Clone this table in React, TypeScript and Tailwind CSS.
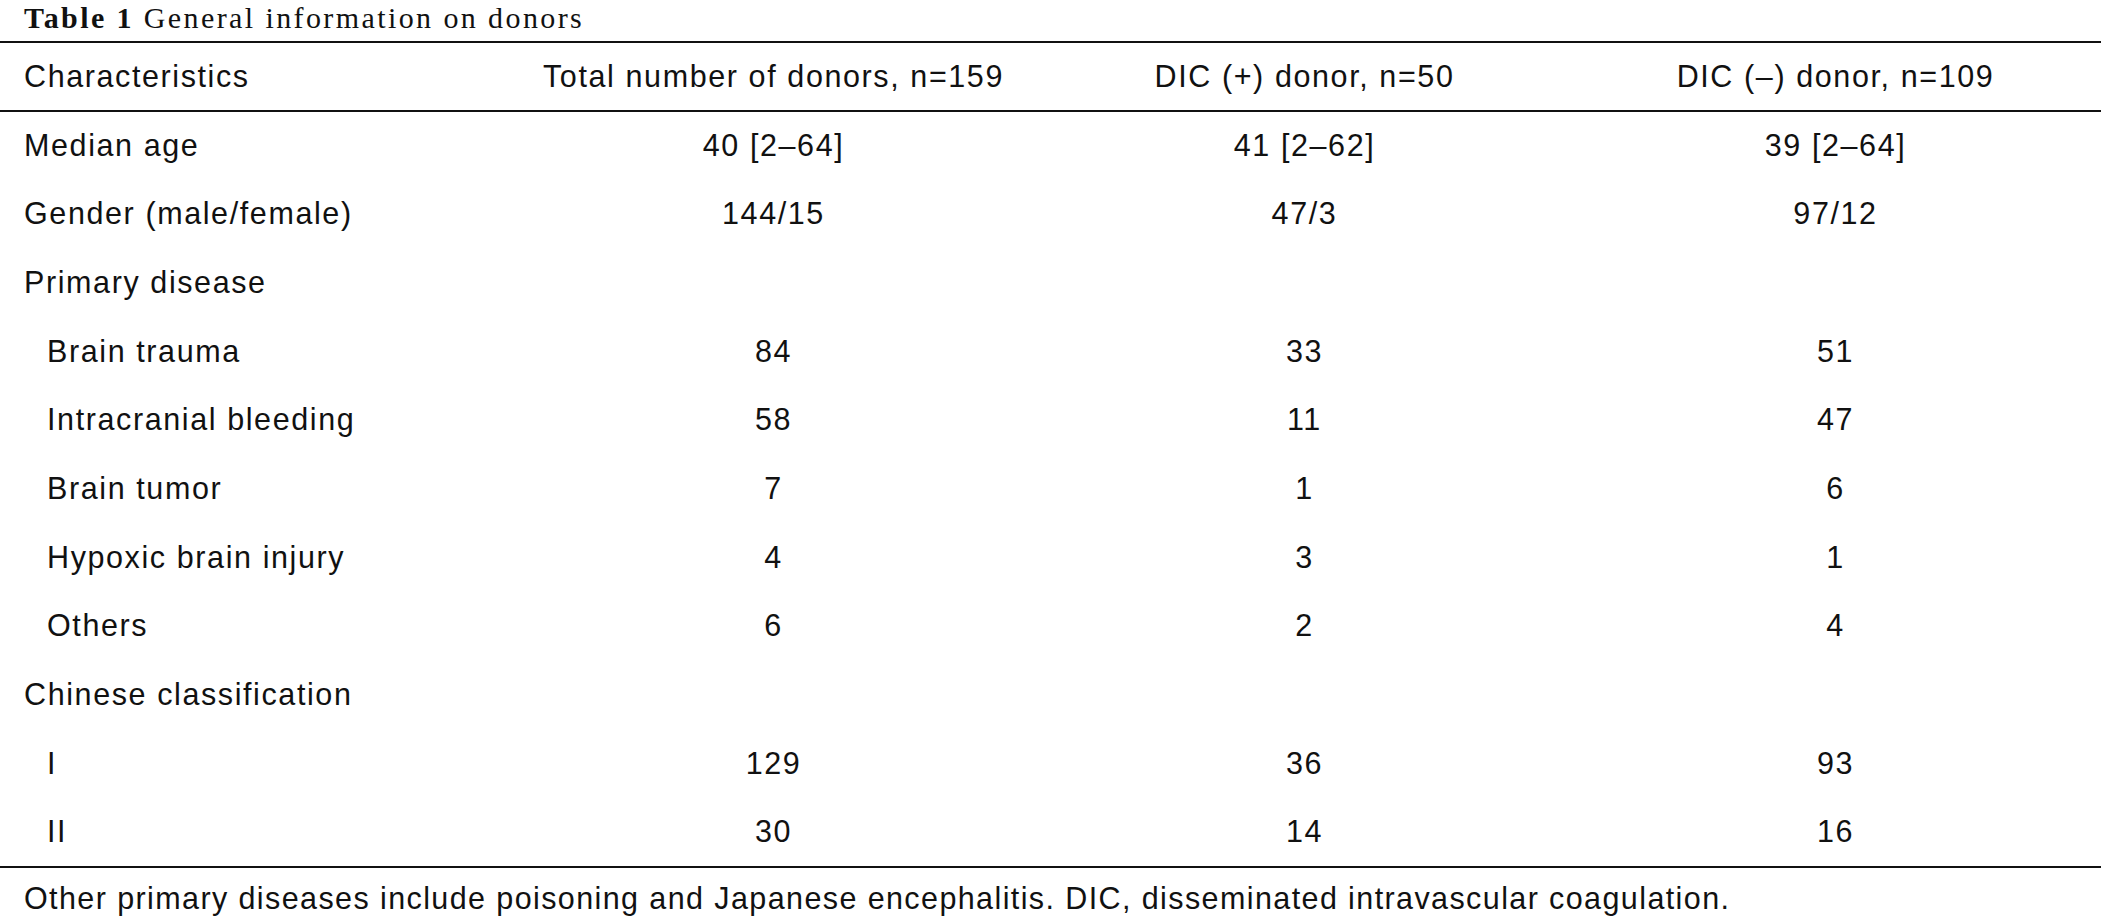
import React from 'react';

type Row = {
  label: string;
  indent?: boolean;
  values?: [string, string, string];
};

const rows: Row[] = [
  { label: 'Median age', values: ['40 [2–64]', '41 [2–62]', '39 [2–64]'] },
  { label: 'Gender (male/female)', values: ['144/15', '47/3', '97/12'] },
  { label: 'Primary disease' },
  { label: 'Brain trauma', indent: true, values: ['84', '33', '51'] },
  { label: 'Intracranial bleeding', indent: true, values: ['58', '11', '47'] },
  { label: 'Brain tumor', indent: true, values: ['7', '1', '6'] },
  { label: 'Hypoxic brain injury', indent: true, values: ['4', '3', '1'] },
  { label: 'Others', indent: true, values: ['6', '2', '4'] },
  { label: 'Chinese classification' },
  { label: 'I', indent: true, values: ['129', '36', '93'] },
  { label: 'II', indent: true, values: ['30', '14', '16'] },
];

const headers = ['Total number of donors, n=159', 'DIC (+) donor, n=50', 'DIC (–) donor, n=109'];

export default function App() {
  return (
    <div className="w-[2101px] h-[916px] bg-white text-[#111] overflow-hidden">
      {/* Caption */}
      <div className="h-[41px] pl-[24px] pt-[1px] font-['Liberation_Serif',serif] text-[30px] leading-[34px] tracking-[2.4px]">
        <span className="font-bold">Table 1</span> General information on donors
      </div>

      <table className="w-full table-fixed border-collapse font-['Liberation_Sans',Arial,sans-serif] text-[30.5px] tracking-[1.6px]">
        <colgroup>
          <col className="w-[508px]" />
          <col />
          <col />
          <col />
        </colgroup>
        <thead>
          <tr className="h-[69px] border-y-2 border-[#111]">
            <th className="text-left font-normal pl-[24px]">Characteristics</th>
            {headers.map((h) => (
              <th key={h} className="text-center font-normal">
                {h}
              </th>
            ))}
          </tr>
        </thead>
        <tbody>
          {rows.map((r, i) => (
            <tr
              key={r.label}
              className={`h-[68.7px] ${i === rows.length - 1 ? 'border-b-2 border-[#111]' : ''}`}
            >
              <td className={r.indent ? 'pl-[47px]' : 'pl-[24px]'}>{r.label}</td>
              {[0, 1, 2].map((c) => (
                <td key={c} className="text-center">
                  {r.values ? r.values[c] : ''}
                </td>
              ))}
            </tr>
          ))}
        </tbody>
      </table>

      {/* Footnote */}
      <p className="pl-[24px] pt-[12px] font-['Liberation_Sans',Arial,sans-serif] text-[30.5px] leading-[36px] tracking-[1.4px]">
        Other primary diseases include poisoning and Japanese encephalitis. DIC, disseminated intravascular coagulation.
      </p>
    </div>
  );
}
